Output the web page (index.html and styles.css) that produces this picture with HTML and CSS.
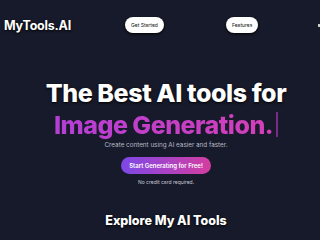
FILE: index.html
```html
<!DOCTYPE html>
<html lang="en">
<head>
    <meta charset="UTF-8">
    <meta name="viewport" content="width=device-width, initial-scale=1.0">
    <title>MyTools.AI</title>
    <link rel="stylesheet" href="styles.css">
</head>
<body>
    <header class="top">
        <div class="logo">MyTools.AI</div>
        <nav class="nav">
            <a class="pill" href="#">Get Started</a>
            <a class="pill" href="#">Features</a>
            <span class="more"></span>
        </nav>
    </header>
    <section class="hero">
        <h1 class="title">The Best AI tools for</h1>
        <div class="typed"><span class="grad">Image Generation.</span><span class="caret"></span></div>
        <p class="sub">Create content using AI easier and faster.</p>
        <a class="cta" href="#">Start Generating for Free!</a>
        <p class="note">No credit card required.</p>
    </section>
    <section class="explore">
        <h2>Explore My AI Tools</h2>
    </section>
</body>
</html>
```

FILE: styles.css
```css
* {
    box-sizing: border-box;
}
body {
    margin: 0;
    background: #171a2a;
    font-family: Inter, "Liberation Sans", sans-serif;
    color: #fff;
    min-height: 240px;
}
.top {
    display: flex;
    align-items: center;
    height: 50px;
    padding: 0 0 0 4px;
}
.logo {
    font-weight: 700;
    font-size: 12.5px;
    letter-spacing: -0.2px;
    text-shadow: 0 1px 3px #000;
    width: 121px;
}
.nav {
    display: flex;
    align-items: center;
    flex: 1;
}
.pill {
    background: #fff;
    color: #111;
    font-size: 5px;
    text-decoration: none;
    border-radius: 8px;
    padding: 5px 6px;
    box-shadow: 0 1px 3px #000;
}
.pill + .pill {
    margin-left: 62px;
}
.more {
    margin-left: auto;
    width: 2px;
    height: 3px;
    background: #ccc;
}
.hero {
    text-align: center;
    padding: 28px 0 0 12px;
}
.title {
    margin: 0;
    font-size: 25px;
    font-weight: 800;
    letter-spacing: -0.4px;
    line-height: 30px;
    text-shadow: 0 1px 3px #000;
}
.typed {
    display: flex;
    justify-content: center;
    align-items: center;
    height: 33px;
}
.grad {
    font-size: 25px;
    font-weight: 800;
    letter-spacing: -0.5px;
    background: linear-gradient(90deg, #b43fd6, #d43fb8);
    -webkit-background-clip: text;
    color: transparent;
}
.caret {
    width: 2px;
    height: 25px;
    margin-left: 3px;
    background: #7a2a8a;
}
.sub {
    margin: 0;
    font-size: 6.3px;
    color: #b8bac8;
}
.cta {
    display: inline-block;
    margin-top: 8px;
    padding: 5px 8px;
    border-radius: 9px;
    background: linear-gradient(90deg, #7d48e8, #d43da0);
    color: #fff;
    font-size: 6px;
    font-weight: 600;
    text-decoration: none;
}
.note {
    margin: 5px 0 0;
    font-size: 5px;
    color: #c8cad6;
}
.explore {
    text-align: center;
    padding: 28px 0 0 12px;
}
.explore h2 {
    margin: 0;
    font-size: 12.5px;
    font-weight: 800;
    text-shadow: 0 1px 3px #000;
}
```
